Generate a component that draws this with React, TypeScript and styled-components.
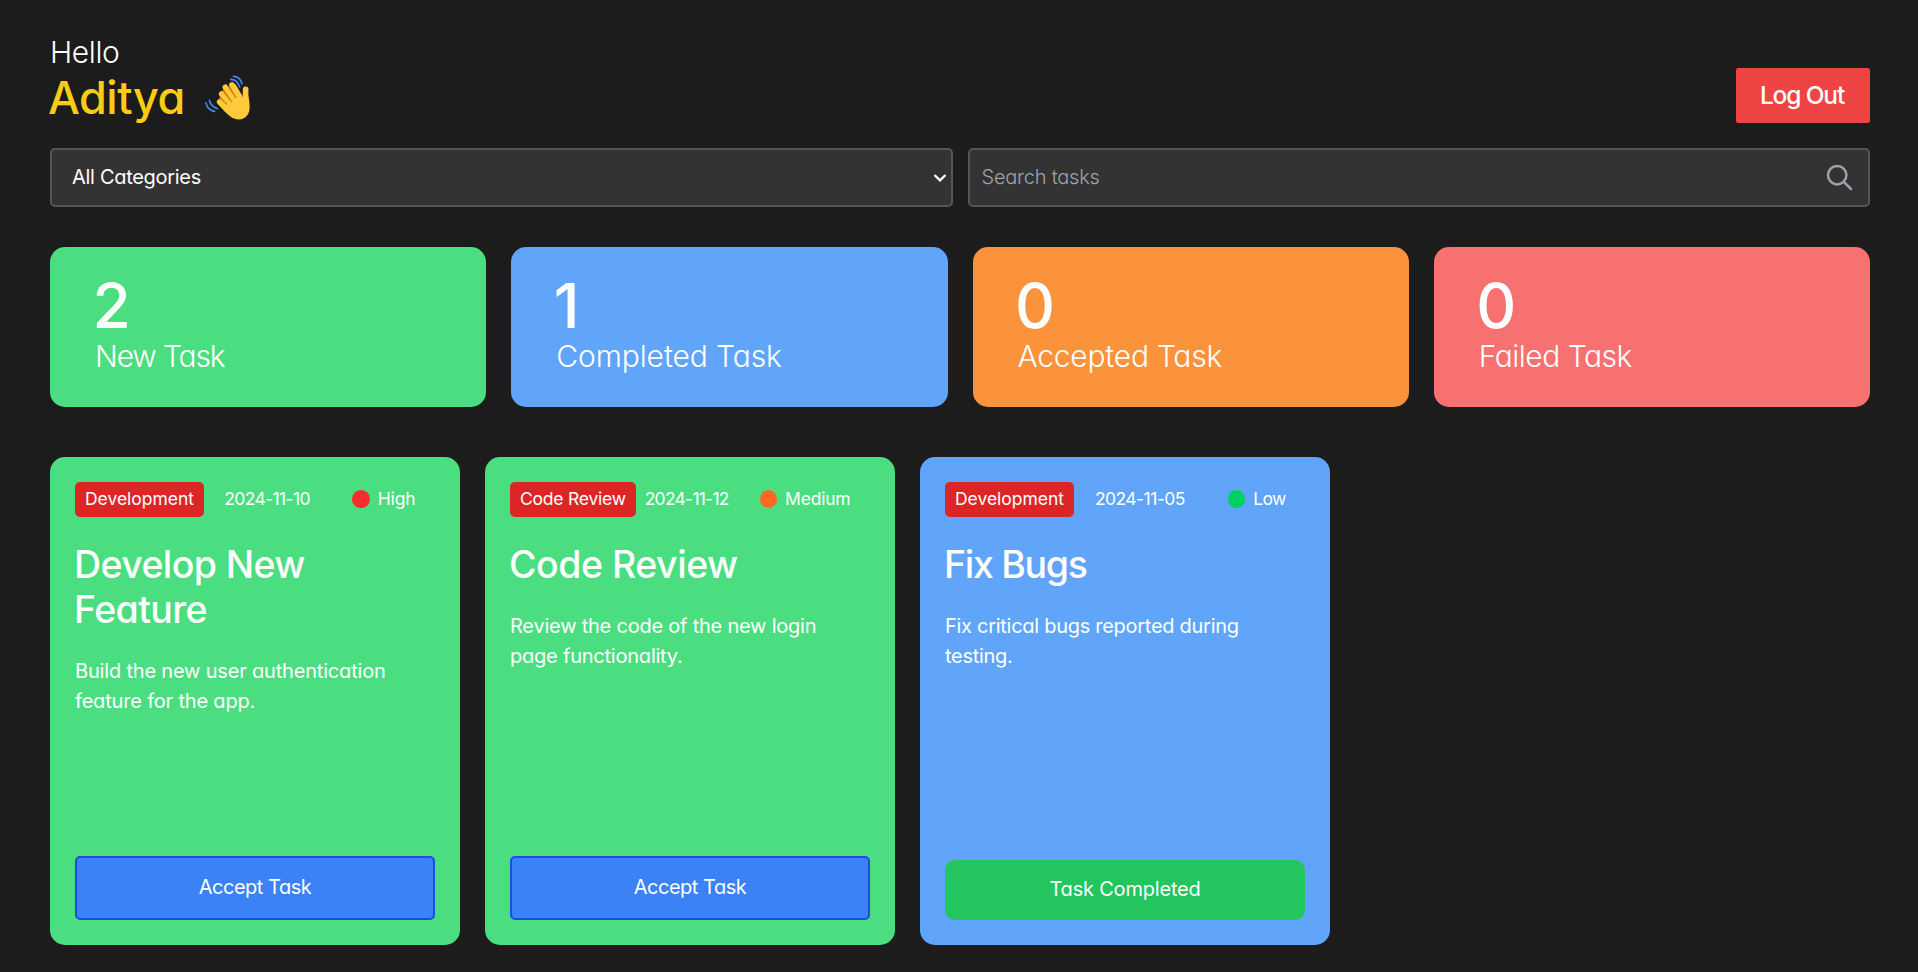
import React from 'react';
import styled, { createGlobalStyle } from 'styled-components';

const GlobalStyle = createGlobalStyle`
  *, *::before, *::after { box-sizing: border-box; }
  body {
    margin: 0;
    background: #1c1c1c;
    color: #fff;
    font-family: Inter, "Liberation Sans", sans-serif;
    font-feature-settings: "cv11";
    font-weight: 400;
  }
  h1, h2, h3, p { margin: 0; font-weight: inherit; }
  button, input, select { font: inherit; font-feature-settings: inherit; color: inherit; }
`;

const Page = styled.main`
  min-height: 972px;
  padding: 34px 48px 27px 50px;
`;

const Header = styled.header`
  display: flex;
  align-items: flex-end;
  justify-content: space-between;
`;

const Greeting = styled.h1`
  font-size: 30px;
  font-weight: 300;
  line-height: 37px;
  letter-spacing: -0.4px;
`;

const UserName = styled.span`
  display: flex;
  align-items: center;
  gap: 20.5px;
  height: 52px;
  padding-top: 1px;
  margin-left: -2px;
  font-size: 45px;
  font-weight: 500;
  line-height: 53px;
  letter-spacing: -0.5px;
  color: #facc15;
`;

const LogOutButton = styled.button`
  width: 134px;
  height: 55px;
  padding: 0 2px 1px 0;
  border: 0;
  border-radius: 2.5px;
  background: #ef4444;
  font-size: 24.5px;
  font-weight: 500;
  letter-spacing: -1.15px;
`;

const Filters = styled.div`
  display: grid;
  grid-template-columns: 1fr 1fr;
  gap: 15px;
  margin-top: 25px;
`;

const Field = styled.div`
  display: flex;
  align-items: center;
  height: 59px;
  border: 2px solid #555;
  border-radius: 5px;
  background: #333;
  font-size: 20px;
`;

const CategorySelect = styled.select`
  flex: 1;
  height: 100%;
  padding: 0 0 1px 20px;
  border: 0;
  outline: 0;
  appearance: none;
  background: transparent;
  letter-spacing: -0.3px;
`;

const Chevron = styled.svg`
  flex: none;
  margin-right: 4px;
`;

const SearchInput = styled.input`
  flex: 1;
  min-width: 0;
  height: 100%;
  padding: 0 0 1px 12px;
  border: 0;
  outline: 0;
  background: transparent;
  font-weight: 300;
  letter-spacing: -0.22px;
  &::placeholder { color: #9ca3af; opacity: 1; }
`;

const SearchIcon = styled.svg`
  flex: none;
  margin-right: 15px;
`;

const Stats = styled.section`
  display: grid;
  grid-template-columns: repeat(4, 1fr);
  gap: 25px;
  margin-top: 40px;
`;

const StatCard = styled.div<{ $color: string }>`
  height: 160px;
  padding: 29px 45px;
  border-radius: 15px;
  background: ${(p) => p.$color};
`;

const StatValue = styled.h2`
  margin-left: -2.5px;
  font-size: 62px;
  font-weight: 500;
  line-height: 60px;
`;

const StatLabel = styled.h3<{ $tracking: number }>`
  font-size: 30px;
  font-weight: 300;
  line-height: 41px;
  letter-spacing: ${(p) => p.$tracking}px;
`;

const TaskList = styled.section`
  display: flex;
  gap: 25px;
  margin-top: 50px;
`;

const TaskCard = styled.article<{ $color: string }>`
  display: flex;
  flex-direction: column;
  width: 410px;
  height: 488px;
  padding: 25px;
  border-radius: 15px;
  background: ${(p) => p.$color};
`;

const TaskMeta = styled.div`
  display: flex;
  align-items: center;
  justify-content: space-between;
  height: 35px;
  font-size: 17.5px;
  line-height: 34px;
`;

const Badge = styled.span<{ $tracking: number }>`
  height: 35px;
  padding: 0 10px;
  border-radius: 5px;
  background: #dc2626;
  letter-spacing: ${(p) => p.$tracking}px;
`;

const TaskDate = styled.span<{ $tracking: number }>`
  height: 35px;
  padding-right: 2px;
  letter-spacing: ${(p) => p.$tracking}px;
`;

const Priority = styled.span<{ $color: string; $tracking: number }>`
  display: flex;
  align-items: center;
  gap: 8px;
  padding: 0 19.5px 1px 20px;
  letter-spacing: ${(p) => p.$tracking}px;
  &::before {
    content: "";
    width: 17.5px;
    height: 17.5px;
    border-radius: 50%;
    background: ${(p) => p.$color};
  }
`;

const TaskTitle = styled.h2<{ $tracking: number }>`
  margin: 25px 0 0 -1px;
  font-size: 37.5px;
  font-weight: 500;
  line-height: 45px;
  letter-spacing: ${(p) => p.$tracking}px;
`;

const TaskText = styled.p<{ $tracking: number }>`
  margin-top: 24px;
  padding-right: 15px;
  font-size: 20px;
  line-height: 30px;
  letter-spacing: ${(p) => p.$tracking}px;
`;

const AcceptButton = styled.button`
  height: 64px;
  margin-top: auto;
  padding: 0 0 2px;
  border: 2px solid #1d4ed8;
  border-radius: 5px;
  background: #3b82f6;
  font-size: 20px;
  letter-spacing: -0.5px;
`;

const CompletedButton = styled.button`
  height: 60px;
  margin-top: auto;
  padding: 0 0 2px;
  border: 0;
  border-radius: 10px;
  background: #22c55e;
  font-size: 20px;
  letter-spacing: -0.2px;
`;

const WavingHand = () => (
  <svg width="46" height="46" viewBox="26 26 138 138" fill="none" strokeLinecap="round" strokeLinejoin="round">
    <g stroke="#4285f4" strokeWidth="5">
      <path d="M29 110q5 22 26 25" />
      <path d="M39 102q5 19 24 25" />
      <path d="M111 30q20 0 26 22" />
      <path d="M103 39q20 0 27 23" />
    </g>
    <g stroke="#ffc83d" strokeWidth="17">
      <path d="M107 56 136 104" />
      <path d="M87 63 122 112" />
      <path d="M76 83 108 122" />
      <path d="M70 107 98 132" />
      <path d="M148 69 147 112" />
    </g>
    <path
      d="M65 113C76 127 92 143 105 153C123 164 145 160 154 145C163 132 160 112 157 92L151 82L137 96C125 89 108 100 91 107Z"
      fill="#ffc83d"
    />
    <g stroke="#e08f00" strokeWidth="4.5">
      <path d="M97 62 118 93" />
      <path d="M80 73 106 106" />
      <path d="M71 94 91 113" />
    </g>
    <path d="M117 56 136 89" stroke="#ffc83d" strokeWidth="4" />
  </svg>
);

const stats = [
  { value: 2, label: 'New Task', color: '#4ade80', tracking: -1.15 },
  { value: 1, label: 'Completed Task', color: '#60a5fa', tracking: -0.1 },
  { value: 0, label: 'Accepted Task', color: '#fb923c', tracking: -0.25 },
  { value: 0, label: 'Failed Task', color: '#f87171', tracking: -0.5 },
];

const tasks = [
  {
    category: 'Development', date: '2024-11-10', priority: 'High', dot: '#fb2c2f', color: '#4ade80',
    title: 'Develop New Feature', text: 'Build the new user authentication feature for the app.', done: false,
    tracking: { badge: -0.03, date: -0.62, priority: -0.15, title: -0.6, text: -0.18 },
  },
  {
    category: 'Code Review', date: '2024-11-12', priority: 'Medium', dot: '#ff6a20', color: '#4ade80',
    title: 'Code Review', text: 'Review the code of the new login page functionality.', done: false,
    tracking: { badge: -0.22, date: -0.75, priority: -0.2, title: -0.48, text: -0.22 },
  },
  {
    category: 'Development', date: '2024-11-05', priority: 'Low', dot: '#00d062', color: '#60a5fa',
    title: 'Fix Bugs', text: 'Fix critical bugs reported during testing.', done: true,
    tracking: { badge: -0.03, date: -0.55, priority: -0.75, title: -1.3, text: -0.28 },
  },
];

export default function App() {
  return (
    <>
      <GlobalStyle />
      <Page>
        <Header>
          <Greeting>
            Hello
            <UserName>
              Aditya <WavingHand />
            </UserName>
          </Greeting>
          <LogOutButton>Log Out</LogOutButton>
        </Header>

        <Filters>
          <Field>
            <CategorySelect>
              <option>All Categories</option>
            </CategorySelect>
            <Chevron width="14" height="10" viewBox="0 0 14 10" fill="none" stroke="#fff" strokeWidth="2.3">
              <path d="M1.5 2 7 7.4 12.5 2" />
            </Chevron>
          </Field>
          <Field>
            <SearchInput placeholder="Search tasks" />
            <SearchIcon width="27" height="27" viewBox="0 0 27 27" fill="none" stroke="#9ca3af" strokeWidth="2.5" strokeLinecap="round">
              <circle cx="11.2" cy="11.2" r="9.2" />
              <path d="M17.8 17.8 25 25" />
            </SearchIcon>
          </Field>
        </Filters>

        <Stats>
          {stats.map((s) => (
            <StatCard key={s.label} $color={s.color}>
              <StatValue>{s.value}</StatValue>
              <StatLabel $tracking={s.tracking}>{s.label}</StatLabel>
            </StatCard>
          ))}
        </Stats>

        <TaskList>
          {tasks.map((t) => (
            <TaskCard key={t.title} $color={t.color}>
              <TaskMeta>
                <Badge $tracking={t.tracking.badge}>{t.category}</Badge>
                <TaskDate $tracking={t.tracking.date}>{t.date}</TaskDate>
                <Priority $color={t.dot} $tracking={t.tracking.priority}>{t.priority}</Priority>
              </TaskMeta>
              <TaskTitle $tracking={t.tracking.title}>{t.title}</TaskTitle>
              <TaskText $tracking={t.tracking.text}>{t.text}</TaskText>
              {t.done ? <CompletedButton>Task Completed</CompletedButton> : <AcceptButton>Accept Task</AcceptButton>}
            </TaskCard>
          ))}
        </TaskList>
      </Page>
    </>
  );
}
